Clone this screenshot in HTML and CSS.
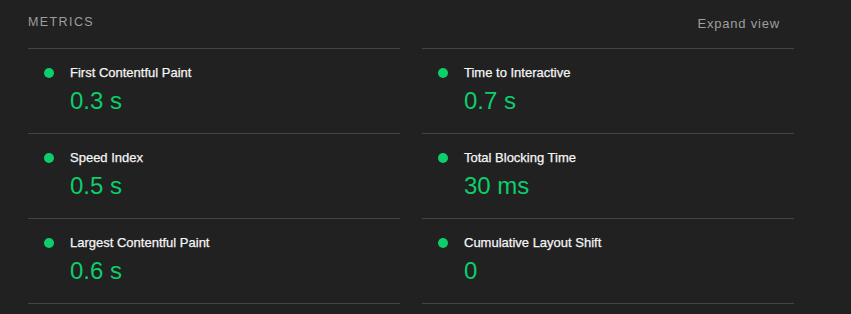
FILE: index.html
```html
<!DOCTYPE html>
<html lang="en">
<head>
    <meta charset="UTF-8">
    <title>Metrics</title>
    <link rel="stylesheet" href="styles.css">
</head>
<body>
    <div class="metrics">
        <div class="metrics-header">
            <div class="header-cell"><span class="metrics-title">METRICS</span></div>
            <div class="header-cell header-right"><span class="metrics-toggle">Expand view</span></div>
        </div>
        <div class="metrics-grid">
            <div class="metric">
                <div class="metric-title"><span class="dot"></span>First Contentful Paint</div>
                <div class="metric-value">0.3&nbsp;s</div>
            </div>
            <div class="metric">
                <div class="metric-title"><span class="dot"></span>Time to Interactive</div>
                <div class="metric-value">0.7&nbsp;s</div>
            </div>
            <div class="metric">
                <div class="metric-title"><span class="dot"></span>Speed Index</div>
                <div class="metric-value">0.5&nbsp;s</div>
            </div>
            <div class="metric">
                <div class="metric-title"><span class="dot"></span>Total Blocking Time</div>
                <div class="metric-value">30&nbsp;ms</div>
            </div>
            <div class="metric">
                <div class="metric-title"><span class="dot"></span>Largest Contentful Paint</div>
                <div class="metric-value">0.6&nbsp;s</div>
            </div>
            <div class="metric">
                <div class="metric-title"><span class="dot"></span>Cumulative Layout Shift</div>
                <div class="metric-value">0</div>
            </div>
        </div>
    </div>
</body>
</html>
```

FILE: styles.css
```css
body {
    margin: 0;
    background-color: #212121;
    font-family: "Liberation Sans", Arial, sans-serif;
    color: #f5f5f5;
}

.metrics {
    width: 766px;
    padding-left: 28px;
}

.metrics-header,
.metrics-grid {
    display: grid;
    grid-template-columns: 372px 372px;
    column-gap: 22px;
}

.header-cell {
    display: flex;
    align-items: center;
    padding-bottom: 4px;
    box-sizing: border-box;
    height: 49px;
    border-bottom: 1px solid #444;
}

/* the top line only runs under the left column */
.header-right {
    border-bottom-color: transparent;
    justify-content: flex-end;
    padding-right: 14px;
    padding-bottom: 2px;
}

.metrics-title {
    font-size: 12.5px;
    letter-spacing: 1.4px;
    color: #9e9e9e;
}

.metrics-toggle {
    font-size: 13px;
    letter-spacing: 0.8px;
    color: #9e9e9e;
}

.metric {
    height: 84px;
    border-bottom: 1px solid #444;
}

.metrics-grid .metric:nth-child(2) {
    border-top: 1px solid #444;
    margin-top: -1px;
}

.metric-title {
    display: flex;
    align-items: center;
    margin-top: 16px;
    padding-left: 16px;
    font-size: 13px;
    line-height: 16px;
    color: #f5f5f5;
    -webkit-text-stroke: 0.25px #f5f5f5;
}

.dot {
    width: 10px;
    height: 10px;
    border-radius: 50%;
    background-color: #0cce6b;
    margin-right: 16px;
}

.metric-value {
    padding-left: 42px;
    margin-top: 6px;
    font-size: 24px;
    line-height: 28px;
    color: #0cce6b;
}
```
